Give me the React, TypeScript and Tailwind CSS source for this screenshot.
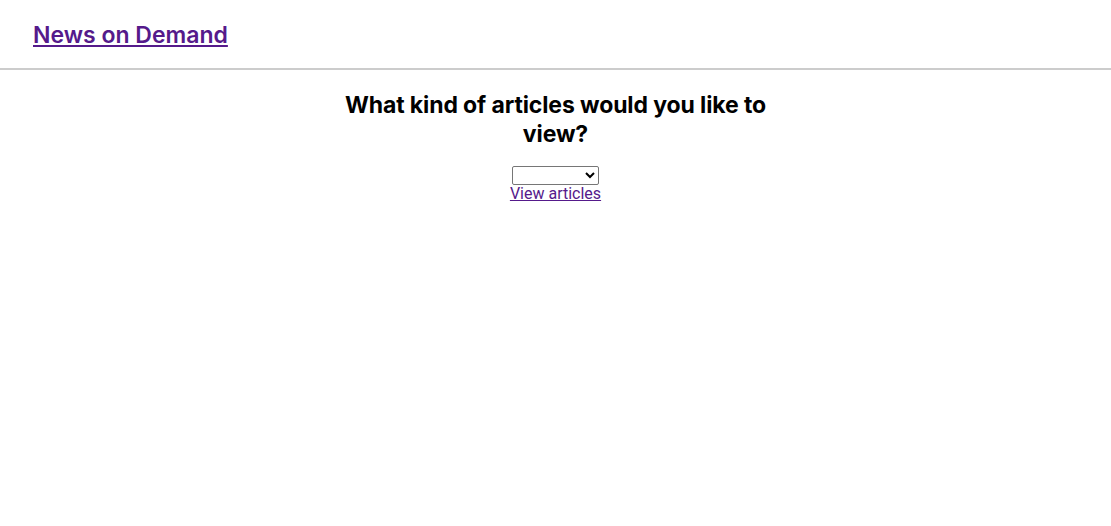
export default function App() {
  return (
    <div className="min-h-screen bg-white font-['Inter',sans-serif] text-black">
      <header className="border-b-2 border-[#cccccc] px-[33px] pt-[20px] pb-[18px]">
        <a href="#" className="text-[23px] leading-[30px] font-semibold text-[#551a8b] underline">
          News on Demand
        </a>
      </header>
      <main className="flex flex-col items-center">
        <h2 className="mt-[21px] w-[430px] text-center text-[23px] leading-[29px] font-bold tracking-[-0.005em]">
          What kind of articles would you like to view?
        </h2>
        <select className="mt-[17px] h-[19px] w-[87px] border border-[#767676] rounded-[2px] text-[13px]">
          <option value=""></option>
        </select>
        <a href="#" className="text-[16px] leading-[18px] text-[#551a8b] underline font-['Roboto',sans-serif]">
          View articles
        </a>
      </main>
    </div>
  );
}
